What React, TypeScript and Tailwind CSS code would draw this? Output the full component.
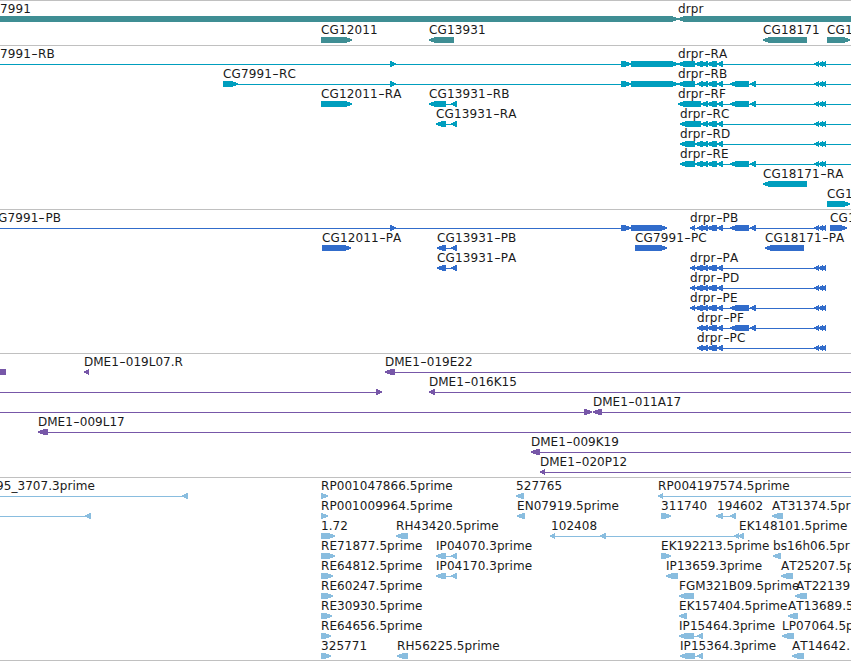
type Dir = 'l' | 'r' | 'b';

type Block = [number, number, Dir];

type Row = {
  labels?: [number, string][];
  lines?: [number, number][];
  blocks?: Block[];
};

type TrackData = {
  name: string;
  fill: string;
  className: string;
  rows: Row[];
};

const END = 851;

// exon groups shared by the drpr isoforms
const tail: Block[] = [
  [814, 819, 'l'],
  [818, 823, 'l'],
  [821, 826, 'l'],
];

const mid: Block[] = [
  [701, 708, 'l'],
  [707, 717, 'l'],
  [717, 723, 'l'],
];

const extra: Block[] = [
  [730, 749, 'l'],
  [750, 756, 'l'],
];

const tracks: TrackData[] = [
  {
    name: 'genes',
    fill: 'fill-[#3f8e94]',
    className: 'gap-px pb-0.5 tracking-[0.12px]',
    rows: [
      {
        labels: [[0, '7991'], [678, 'drpr']],
        blocks: [[-10, 678, 'r'], [678, 870, 'l']],
      },
      {
        labels: [[321, 'CG12011'], [429, 'CG13931'], [763, 'CG18171'], [827, 'CG1']],
        blocks: [[321, 352, 'r'], [429, 454, 'l'], [763, 807, 'l'], [827, 850, 'r']],
      },
    ],
  },
  {
    name: 'transcripts',
    fill: 'fill-[#009ebe]',
    className: 'pb-0.5 tracking-[0.12px]',
    rows: [
      {
        labels: [[0, '7991-RB'], [678, 'drpr-RA']],
        lines: [[0, END]],
        blocks: [[390, 396, 'r'], [621, 631, 'r'], [631, 678, 'r'], [678, 695, 'l'], [695, 703, 'l'], ...mid, ...tail],
      },
      {
        labels: [[223, 'CG7991-RC'], [678, 'drpr-RB']],
        lines: [[223, END]],
        blocks: [[223, 238, 'r'], [390, 396, 'r'], [621, 631, 'r'], [631, 678, 'r'], [678, 695, 'l'], [697, 703, 'l'], ...mid, ...extra, ...tail],
      },
      {
        labels: [[321, 'CG12011-RA'], [429, 'CG13931-RB'], [678, 'drpr-RF']],
        lines: [[429, 457], [678, END]],
        blocks: [[321, 352, 'r'], [429, 446, 'l'], [451, 457, 'l'], [678, 701, 'l'], ...mid, ...extra, ...tail],
      },
      {
        labels: [[436, 'CG13931-RA'], [680, 'drpr-RC']],
        lines: [[436, 457], [680, END]],
        blocks: [[436, 446, 'l'], [451, 457, 'l'], [680, 701, 'l'], ...mid, ...tail],
      },
      {
        labels: [[680, 'drpr-RD']],
        lines: [[680, END]],
        blocks: [[680, 695, 'l'], [695, 703, 'l'], ...mid, ...tail],
      },
      {
        labels: [[680, 'drpr-RE']],
        lines: [[680, END]],
        blocks: [[680, 695, 'l'], [695, 703, 'l'], ...mid, ...extra, ...tail],
      },
      { labels: [[763, 'CG18171-RA']], blocks: [[763, 807, 'l']] },
      { labels: [[827, 'CG1']], blocks: [[827, 850, 'r']] },
    ],
  },
  {
    name: 'proteins',
    fill: 'fill-[#316ccb]',
    className: 'pb-0.5 tracking-[0.12px]',
    rows: [
      {
        labels: [[-2, 'G7991-PB'], [690, 'drpr-PB'], [830, 'CG1']],
        lines: [[0, 667], [690, 826]],
        blocks: [[390, 396, 'r'], [621, 631, 'r'], [631, 667, 'r'], [690, 695, 'l'], [697, 703, 'l'], ...mid, ...extra, ...tail, [830, 847, 'r']],
      },
      {
        labels: [[322, 'CG12011-PA'], [437, 'CG13931-PB'], [635, 'CG7991-PC'], [765, 'CG18171-PA']],
        lines: [[437, 457]],
        blocks: [[322, 351, 'r'], [437, 446, 'l'], [451, 457, 'l'], [635, 667, 'r'], [765, 804, 'l']],
      },
      {
        labels: [[437, 'CG13931-PA'], [690, 'drpr-PA']],
        lines: [[437, 457], [690, 826]],
        blocks: [[437, 446, 'l'], [451, 457, 'l'], [690, 695, 'l'], [695, 703, 'l'], ...mid, ...tail],
      },
      {
        labels: [[690, 'drpr-PD']],
        lines: [[690, 826]],
        blocks: [[690, 695, 'l'], [695, 703, 'l'], ...mid, ...tail],
      },
      {
        labels: [[690, 'drpr-PE']],
        lines: [[690, 826]],
        blocks: [[690, 695, 'l'], [695, 703, 'l'], ...mid, ...extra, ...tail],
      },
      {
        labels: [[697, 'drpr-PF']],
        lines: [[697, 826]],
        blocks: [[697, 703, 'l'], ...mid, ...extra, ...tail],
      },
      {
        labels: [[697, 'drpr-PC']],
        lines: [[697, 826]],
        blocks: [[697, 703, 'l'], ...mid, ...tail],
      },
    ],
  },
  {
    name: 'clones',
    fill: 'fill-[#7757a8]',
    className: 'pb-0.5',
    rows: [
      {
        labels: [[84, 'DME1-019L07.R'], [385, 'DME1-019E22']],
        lines: [[385, END]],
        blocks: [[0, 6, 'b'], [84, 89, 'l'], [385, 395, 'l']],
      },
      {
        labels: [[429, 'DME1-016K15']],
        lines: [[0, 382], [429, END]],
        blocks: [[376, 382, 'r'], [429, 435, 'l']],
      },
      {
        labels: [[593, 'DME1-011A17']],
        lines: [[0, 591], [593, END]],
        blocks: [[584, 592, 'r'], [593, 602, 'l']],
      },
      { labels: [[38, 'DME1-009L17']], lines: [[38, END]], blocks: [[38, 48, 'l']] },
      { labels: [[531, 'DME1-009K19']], lines: [[531, END]], blocks: [[531, 540, 'l']] },
      { labels: [[540, 'DME1-020P12']], lines: [[540, END]], blocks: [[540, 545, 'l']] },
    ],
  },
  {
    name: 'ests',
    fill: 'fill-[#89bddf]',
    className: 'border-b pb-px tracking-[0.06px]',
    rows: [
      {
        labels: [[-4, '95_3707.3prime'], [321, 'RP001047866.5prime'], [516, '527765'], [658, 'RP004197574.5prime']],
        lines: [[0, 188], [658, END]],
        blocks: [[182, 188, 'l'], [321, 328, 'r'], [516, 524, 'l'], [658, 663, 'l']],
      },
      {
        labels: [[321, 'RP001009964.5prime'], [517, 'EN07919.5prime'], [661, '311740'], [717, '194602'], [772, 'AT31374.5pr']],
        lines: [[0, 91], [716, 736]],
        blocks: [[85, 91, 'l'], [321, 328, 'r'], [517, 525, 'l'], [661, 671, 'r'], [716, 723, 'l'], [730, 736, 'l'], [772, 783, 'l']],
      },
      {
        labels: [[321, '1.72'], [396, 'RH43420.5prime'], [551, '102408'], [739, 'EK148101.5prime']],
        lines: [[550, 740]],
        blocks: [[321, 335, 'r'], [396, 408, 'l'], [550, 555, 'l'], [600, 606, 'l'], [734, 739, 'l'], [738, 744, 'l']],
      },
      {
        labels: [[321, 'RE71877.5prime'], [436, 'IP04070.3prime'], [661, 'EK192213.5prime'], [773, 'bs16h06.5pr']],
        lines: [[436, 457]],
        blocks: [[321, 335, 'r'], [436, 446, 'l'], [451, 457, 'l'], [661, 671, 'r'], [773, 781, 'l']],
      },
      {
        labels: [[321, 'RE64812.5prime'], [436, 'IP04170.3prime'], [666, 'IP13659.3prime'], [781, 'AT25207.5p']],
        lines: [[436, 457]],
        blocks: [[321, 333, 'r'], [436, 446, 'l'], [451, 457, 'l'], [666, 678, 'l'], [781, 793, 'l']],
      },
      {
        labels: [[321, 'RE60247.5prime'], [679, 'FGM321B09.5prime'], [796, 'AT22139']],
        blocks: [[321, 333, 'r'], [679, 694, 'l'], [795, 807, 'l']],
      },
      {
        labels: [[321, 'RE30930.5prime'], [679, 'EK157404.5prime'], [788, 'AT13689.5']],
        blocks: [[321, 332, 'r'], [679, 687, 'l'], [788, 798, 'l']],
      },
      {
        labels: [[321, 'RE64656.5prime'], [679, 'IP15464.3prime'], [782, 'LP07064.5p']],
        lines: [[679, 703]],
        blocks: [[321, 331, 'r'], [679, 694, 'l'], [697, 703, 'l'], [782, 794, 'l']],
      },
      {
        labels: [[321, '325771'], [397, 'RH56225.5prime'], [680, 'IP15364.3prime'], [792, 'AT14642.']],
        lines: [[680, 703]],
        blocks: [[321, 331, 'r'], [397, 408, 'l'], [680, 695, 'l'], [697, 703, 'l'], [792, 804, 'l']],
      },
    ],
  },
];

// six pixels high, the pointed end is at most six pixels long
function blockPoints([x0, x1, dir]: Block) {
  if (dir === 'b') return `${x0},0 ${x1},0 ${x1},6 ${x0},6`;
  const head = Math.min(6, x1 - x0 - 0.5);
  if (dir === 'l') {
    return `${x0},2.3 ${x0 + head},0 ${x1},0 ${x1},6 ${x0 + head},6 ${x0},3.7`;
  }
  return `${x1},2.3 ${x1 - head},0 ${x0},0 ${x0},6 ${x1 - head},6 ${x1},3.7`;
}

function Label({ x, text }: { x: number; text: string }) {
  const [head, rest] = text.split('-');

  return (
    <span className="absolute top-0 leading-[14px] whitespace-pre" style={{ left: x }}>
      {head}
      {rest && (
        <>
          <span className="inline-block w-[7px] origin-center scale-x-150 text-center">-</span>
          {rest}
        </>
      )}
    </span>
  );
}

function FeatureRow({ row, fill }: { row: Row; fill: string }) {
  return (
    <div className="relative flex h-5 flex-col justify-end">
      {row.labels?.map(([x, text]) => (
        <Label key={text + x} x={x} text={text} />
      ))}
      <svg className={`block h-1.5 w-full ${fill}`} shapeRendering="crispEdges">
        {row.lines?.map(([a, b]) => (
          <rect key={a} x={a} y={3} width={b - a} height={1} />
        ))}
        {row.blocks?.map((b) => (
          <polygon key={b[0]} points={blockPoints(b)} />
        ))}
      </svg>
    </div>
  );
}

export default function App() {
  return (
    <div className="flex h-[661px] w-[851px] flex-col overflow-hidden bg-white font-['DejaVu_Sans',sans-serif] text-[12px] text-[#1a1a1a] [font-kerning:none]">
      {tracks.map((track) => (
        <section
          key={track.name}
          className={`flex flex-col border-t border-[#c0c0c0] pt-px ${track.className}`}
        >
          {track.rows.map((row, i) => (
            <FeatureRow key={i} row={row} fill={track.fill} />
          ))}
        </section>
      ))}
    </div>
  );
}
